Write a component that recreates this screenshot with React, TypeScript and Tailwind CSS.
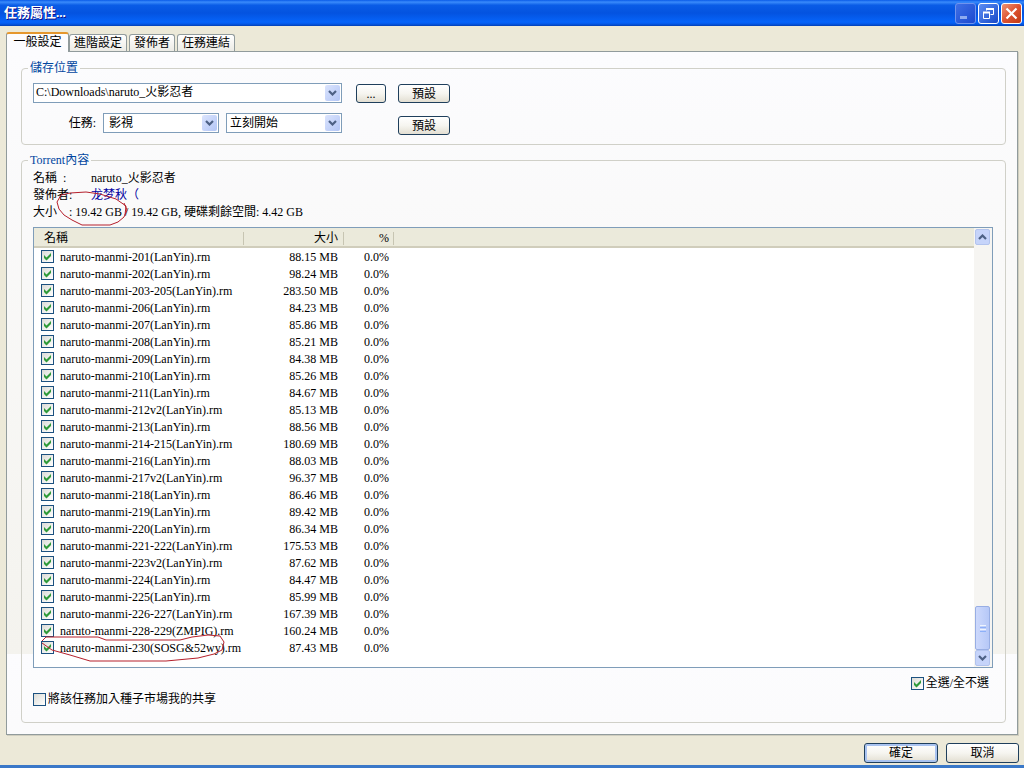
import React from "react";

const files: [string, string][] = [
  ["naruto-manmi-201(LanYin).rm", "88.15 MB"],
  ["naruto-manmi-202(LanYin).rm", "98.24 MB"],
  ["naruto-manmi-203-205(LanYin).rm", "283.50 MB"],
  ["naruto-manmi-206(LanYin).rm", "84.23 MB"],
  ["naruto-manmi-207(LanYin).rm", "85.86 MB"],
  ["naruto-manmi-208(LanYin).rm", "85.21 MB"],
  ["naruto-manmi-209(LanYin).rm", "84.38 MB"],
  ["naruto-manmi-210(LanYin).rm", "85.26 MB"],
  ["naruto-manmi-211(LanYin).rm", "84.67 MB"],
  ["naruto-manmi-212v2(LanYin).rm", "85.13 MB"],
  ["naruto-manmi-213(LanYin).rm", "88.56 MB"],
  ["naruto-manmi-214-215(LanYin).rm", "180.69 MB"],
  ["naruto-manmi-216(LanYin).rm", "88.03 MB"],
  ["naruto-manmi-217v2(LanYin).rm", "96.37 MB"],
  ["naruto-manmi-218(LanYin).rm", "86.46 MB"],
  ["naruto-manmi-219(LanYin).rm", "89.42 MB"],
  ["naruto-manmi-220(LanYin).rm", "86.34 MB"],
  ["naruto-manmi-221-222(LanYin).rm", "175.53 MB"],
  ["naruto-manmi-223v2(LanYin).rm", "87.62 MB"],
  ["naruto-manmi-224(LanYin).rm", "84.47 MB"],
  ["naruto-manmi-225(LanYin).rm", "85.99 MB"],
  ["naruto-manmi-226-227(LanYin).rm", "167.39 MB"],
  ["naruto-manmi-228-229(ZMPIG).rm", "160.24 MB"],
  ["naruto-manmi-230(SOSG&52wy).rm", "87.43 MB"],
];

function Check({ checked = false, id }: { checked?: boolean; id: string }) {
  return (
    <span className="relative block size-[13px] shrink-0">
      <input
        id={id}
        type="checkbox"
        defaultChecked={checked}
        className="peer block size-[13px] appearance-none border border-[#1c5180] bg-linear-to-br from-[#dcdcd7] to-white"
      />
      <svg
        viewBox="0 0 13 13"
        className="pointer-events-none absolute inset-0 hidden size-[13px] peer-checked:block"
      >
        <path d="M3 5v3l2.500 2.500L10 6V3L5.500 7.500z" fill="#2f9a3a" />
      </svg>
    </span>
  );
}

function Chevron({ up = false }: { up?: boolean }) {
  return (
    <svg viewBox="0 0 9 6" className="h-1.5 w-[9px]" fill="none" stroke="#4d6185" strokeWidth="2.200">
      <path d={up ? "M1 5l3.500-3.500L8 5" : "M1 1l3.500 3.500L8 1"} />
    </svg>
  );
}

function Combo({ value, label, className, textPad }: { value: string; label: string; className: string; textPad: string }) {
  return (
    <span className={`relative block h-5 ${className}`}>
      <select
        aria-label={label}
        className={`block h-5 w-full appearance-none border border-[#7f9db9] bg-white pr-5 leading-4 ${textPad}`}
      >
        <option>{value}</option>
      </select>
      <span className="pointer-events-none absolute top-0.5 right-0.5 flex h-4 w-[15px] items-center justify-center rounded-xs bg-linear-to-br from-[#dbe4fd] to-[#b3c6f6]">
        <Chevron />
      </span>
    </span>
  );
}

function XpButton({ children, className, primary = false }: { children: React.ReactNode; className: string; primary?: boolean }) {
  return (
    <button
      type="button"
      className={`flex items-center justify-center rounded-[3px] border border-[#1f3f5c] bg-linear-to-b from-white via-[#f6f5f0] to-[#e3dfd2] leading-4 ${
        primary ? "inset-ring-2 inset-ring-[#a9c3f0]" : ""
      } ${className}`}
    >
      {children}
    </button>
  );
}

const titleButton =
  "flex size-[21px] items-center justify-center rounded-[3px] border";

export default function App() {
  return (
    <div className="relative flex min-h-screen flex-col bg-[#ece9d8] font-['Liberation_Serif','Noto_Sans_CJK_TC',serif] text-xs leading-4 text-black">
      <header className="flex h-[26px] items-center justify-between bg-[linear-gradient(#0a5be8,#3a8bfb_8%,#0a5ce6_20%,#0453e0_50%,#0664fa_85%,#0559e8_92%,#0340b4)] pr-0.5 pl-1">
        <h1 className="text-[13px] font-bold text-white [text-shadow:1px_1px_0_#0f1089]">任務屬性...</h1>
        <div className="flex gap-0.5">
          <button type="button" aria-label="最小化" className={`${titleButton} border-[#6f93ee] bg-linear-to-br from-[#3f6fe6] to-[#1c48cf]`}>
            <svg viewBox="0 0 19 19" className="size-[19px]"><path d="M4 12h7v3H4z" fill="#8fabf0" /></svg>
          </button>
          <button type="button" aria-label="還原" className={`${titleButton} border-white bg-linear-to-br from-[#5d8df3] to-[#1848c8]`}>
            <svg viewBox="0 0 19 19" className="size-[19px]" fill="none" stroke="#fff">
              <path d="M7.500 6.500V4.500h7v6h-3M4.500 8.500h6v6h-6z" />
              <path d="M7 5h8M4 8.500h7" strokeWidth="2" />
            </svg>
          </button>
          <button type="button" aria-label="關閉" className={`${titleButton} border-white bg-linear-to-br from-[#ee9274] via-[#dd5331] to-[#c13a12]`}>
            <svg viewBox="0 0 19 19" className="size-[19px]" stroke="#fff" strokeWidth="2.200">
              <path d="M4.500 4.500l10 10M14.500 4.500l-10 10" />
            </svg>
          </button>
        </div>
      </header>

      <nav role="tablist" className="flex h-[25px] items-end pl-1.5">
        <button
          type="button"
          role="tab"
          aria-selected="true"
          className="relative z-10 -mb-px h-5 w-[63px] rounded-t-[3px] border border-t-2 border-[#919b9c] border-t-[#e5972d] border-b-0 bg-[#fcfcfe] pb-1 leading-4"
        >
          一般設定
        </button>
        <div className="flex gap-0.5">
          {["進階設定", "發佈者", "任務連結"].map((t) => (
            <button
              key={t}
              type="button"
              role="tab"
              aria-selected="false"
              className="h-[17px] rounded-t-[3px] border border-b-0 border-[#919b9c] bg-linear-to-b from-white to-[#ecebe5] px-1 leading-4"
            >
              {t}
            </button>
          ))}
        </div>
      </nav>

      <main className="mx-1.5 flex flex-1 flex-col gap-[7px] border border-[#919b9c] bg-[linear-gradient(#fcfcfe,#f4f3ee)] bg-[length:100%_602px] px-3.5 pt-2 pr-[11px] pb-[11px] shadow-[1px_1px_0_#d0cebf]">
        <fieldset className="rounded-[4px] border border-[#d0d0c8] px-[11px] pb-[9px]">
          <legend className="-ml-[5px] px-0.5 text-[#0046a0]">儲存位置</legend>
          <div className="flex items-start pt-[7px]">
            <div className="flex w-[309px] flex-col gap-2.5">
              <Combo value="C:\Downloads\naruto_火影忍者" label="儲存位置" className="w-full" textPad="pl-0.5 pb-0.5" />
              <div className="flex items-center justify-end gap-[7px]">
                <span>任務:</span>
                <Combo value="影視" label="任務" className="w-[116px]" textPad="pl-[5px]" />
                <Combo value="立刻開始" label="開始方式" className="w-[116px]" textPad="pl-[3px]" />
              </div>
            </div>
            <XpButton className="mt-px ml-3.5 h-[19px] w-[30px]">...</XpButton>
            <div className="mt-px ml-3 flex flex-col gap-[13px]">
              <XpButton className="h-[19px] w-[52px]">預設</XpButton>
              <XpButton className="h-[19px] w-[52px]">預設</XpButton>
            </div>
          </div>
        </fieldset>

        <fieldset className="flex flex-1 flex-col rounded-[4px] border border-[#d0d0c8] px-[11px] pb-3.5">
          <legend className="-ml-[5px] px-0.5 text-[#0046a0]">Torrent內容</legend>
          <dl className="grid grid-cols-[58px_1fr] pt-0.5 leading-[17px]">
            <dt>名稱&nbsp; :</dt>
            <dd>naruto_火影忍者</dd>
            <dt>發佈者:</dt>
            <dd className="text-[#0000a0]">
              <a href="#publisher">龙梦秋（</a>
            </dd>
            <div className="col-span-2 flex">
              <dt className="w-9">大小</dt>
              <dd>: 19.42 GB / 19.42 GB, 硬碟剩餘空間: 4.42 GB</dd>
            </div>
          </dl>

          <div className="mt-1.5 mr-px flex border border-[#7f9db9] bg-white">
            <div className="flex-1 pb-[11px]">
              <table className="w-full table-fixed border-collapse">
                <colgroup>
                  <col className="w-[209px]" />
                  <col className="w-[100px]" />
                  <col className="w-[50px]" />
                  <col />
                </colgroup>
                <thead>
                  <tr className="h-5 bg-[#ebeadb] shadow-[inset_0_-2px_0_#d0cdbb]">
                    <th className="p-0 pl-2.5 text-left font-normal">名稱</th>
                    <th className="bg-[linear-gradient(#c7c5b2,#c7c5b2)] bg-[length:1px_13px] bg-[position:left_center] bg-no-repeat p-0 pr-[5px] text-right font-normal">大小</th>
                    <th className="bg-[linear-gradient(#c7c5b2,#c7c5b2)] bg-[length:1px_13px] bg-[position:left_center] bg-no-repeat p-0 pr-1 text-right font-normal">%</th>
                    <th aria-label="其他" className="bg-[linear-gradient(#c7c5b2,#c7c5b2)] bg-[length:1px_13px] bg-[position:left_center] bg-no-repeat p-0" />
                  </tr>
                </thead>
                <tbody>
                  {files.map(([name, size], i) => (
                    <tr key={name} className="h-[17px]">
                      <td className="p-0 pl-[7px]">
                        <div className="flex h-[17px] items-center gap-1.5">
                          <Check checked id={`file-${i}`} />
                          <label htmlFor={`file-${i}`} className="whitespace-nowrap">{name}</label>
                        </div>
                      </td>
                      <td className="p-0 pr-[5px] text-right">{size}</td>
                      <td className="p-0 pr-1 text-right">0.0%</td>
                      <td className="p-0" />
                    </tr>
                  ))}
                </tbody>
              </table>
            </div>
            <div className="flex w-[18px] flex-col justify-between bg-[#f6f5f2] pr-0.5 pl-px">
              <button type="button" aria-label="向上捲動" className="mt-px flex h-4 items-center justify-center rounded-xs border border-[#b3c4ee] bg-[#c6d4fa]">
                <Chevron up />
              </button>
              <div>
                <div className="flex h-11 flex-col items-center justify-center gap-px rounded-xs border border-[#98aee4] bg-linear-to-r from-[#cdd9fc] to-[#b6c8f7]">
                  <i className="h-px w-1.5 bg-[#eef4fe]" />
                  <i className="h-px w-1.5 bg-[#8cb0f8]" />
                  <i className="h-px w-1.5 bg-[#eef4fe]" />
                  <i className="h-px w-1.5 bg-[#8cb0f8]" />
                </div>
                <button type="button" aria-label="向下捲動" className="mb-px flex h-4 w-full items-center justify-center rounded-xs border border-[#b3c4ee] bg-[#c6d4fa]">
                  <Chevron />
                </button>
              </div>
            </div>
          </div>

          <div className="mt-[7px] flex items-center justify-end gap-0.5 pr-[5px]">
            <Check checked id="all" />
            <label htmlFor="all">全選/全不選</label>
          </div>
          <div className="flex items-center gap-0.5">
            <Check id="share" />
            <label htmlFor="share">將該任務加入種子市場我的共享</label>
          </div>
        </fieldset>
      </main>

      <footer className="flex justify-end gap-2 border-b-[3px] border-[#3a78c8] pt-2 pr-[5px] pb-0.5">
        <XpButton primary className="h-5 w-[74px]">確定</XpButton>
        <XpButton className="h-5 w-[73px]">取消</XpButton>
      </footer>

      <svg viewBox="0 0 90 45" className="pointer-events-none absolute top-[185px] left-[50px] h-[45px] w-[90px]" fill="none" stroke="#b5202c">
        <path d="M75 30L76 21L66 14L50 9L36 7L20 8L11 10L7 17L9 24L14 30L22 35L32 40L60 40L68 37L74 32L77 25L74 18" strokeLinejoin="round" />
      </svg>
      <svg viewBox="0 0 220 45" className="pointer-events-none absolute top-[625px] left-[30px] h-[45px] w-[220px]" fill="none" stroke="#b5202c">
        <path d="M12 16L16 12L32 12L68 12L76 15L150 15L162 12L178 10L190 11L194 17L192 25L184 29L168 33L136 36L60 36L40 30L22 25L12 18" strokeLinejoin="round" />
      </svg>
    </div>
  );
}
